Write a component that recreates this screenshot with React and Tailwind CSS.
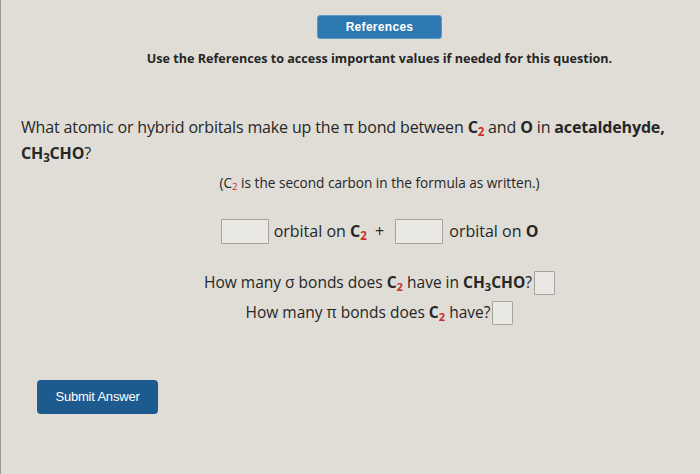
import React from "react";

const Sub = ({ children, red }) => (
    <sub className={`text-[0.72em] relative top-[0.25em] align-baseline ${red ? "text-[#c8302a]" : ""}`}>{children}</sub>
);

const Box = ({ w, h }) => (
    <span className={`inline-block ${w} ${h} border border-[#a5a39e] bg-[#e9e8e3] rounded-[1px] align-middle`} />
);

export default function App() {
    return (
        <div className="w-full h-[474px] bg-[#dfddd6] border-l border-[#9a968f] text-[#262626] font-['Open_Sans',sans-serif] pt-[15px] overflow-hidden">

            {/* references header */}
            <div className="flex flex-col items-center pl-[58px]">
                <button className="w-[125px] h-[24px] rounded-[3px] bg-[#2e78b2] border border-[#5b98c6] text-white text-[12px] font-bold font-['Liberation_Sans',sans-serif] tracking-[0.3px]">
                    References
                </button>
                <p className="mt-[11px] text-[12.6px] leading-[18px] font-bold">
                    Use the References to access important values if needed for this question.
                </p>
            </div>

            {/* question */}
            <p className="mt-[46px] ml-[20px] text-[16px] leading-[26px] tracking-[-0.15px] whitespace-nowrap">
                What atomic or hybrid orbitals make up the π bond between <b>C<Sub red>2</Sub></b> and <b>O</b> in <b>acetaldehyde,</b>
                <br />
                <b>CH<Sub>3</Sub>CHO</b>?
            </p>

            <div className="flex flex-col items-center pl-[58px]">
                <p className="mt-[7px] text-[13.6px] leading-[20px]">
                    (C<Sub red>2</Sub> is the second carbon in the formula as written.)
                </p>

                <div className="mt-[25px] h-[26px] flex items-center text-[16px]">
                    <Box w="w-[48px]" h="h-[25px]" />
                    <span className="ml-[5px]">orbital on <b>C<Sub red>2</Sub></b> &nbsp;+</span>
                    <span className="ml-[11px]"><Box w="w-[48px]" h="h-[25px]" /></span>
                    <span className="ml-[6px]">orbital on <b>O</b></span>
                </div>

                <div className="mt-[26px] h-[26px] flex items-center text-[15.5px]">
                    <span>How many σ bonds does <b>C<Sub red>2</Sub></b> have in <b>CH<Sub>3</Sub>CHO</b>?</span>
                    <span className="ml-[2px]"><Box w="w-[21px]" h="h-[24px]" /></span>
                </div>
                <div className="mt-[4px] h-[26px] flex items-center text-[15.5px]">
                    <span>How many π bonds does <b>C<Sub red>2</Sub></b> have?</span>
                    <span className="ml-[2px]"><Box w="w-[21px]" h="h-[24px]" /></span>
                </div>
            </div>

            <button className="mt-[54px] ml-[36px] w-[121px] h-[34px] rounded-[4px] bg-[#1d5a8e] text-white text-[13px] font-['Liberation_Sans',sans-serif] tracking-[-0.2px]">
                Submit Answer
            </button>
        </div>
    );
}
